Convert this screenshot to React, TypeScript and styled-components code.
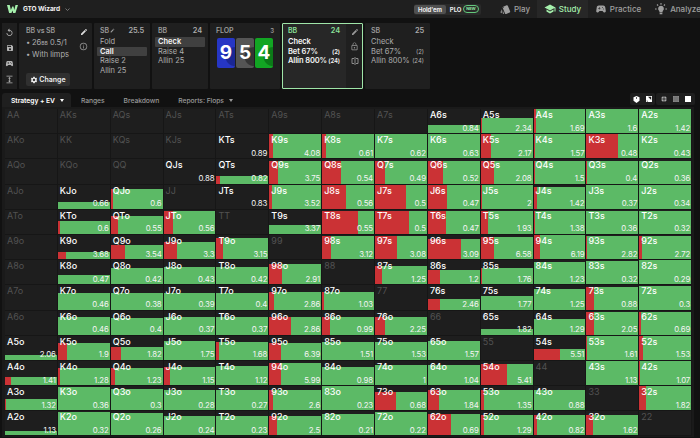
import React, { useState } from 'react'
import styled, { createGlobalStyle } from 'styled-components'
import {
  MdReplay,
  MdSave,
  MdSportsEsports,
  MdExpand,
  MdEdit,
  MdInfoOutline,
  MdSettings,
  MdLockOutline,
  MdSchool,
  MdStyle,
} from 'react-icons/md'

const RANKS = 'AKQJT98765432'.split('')

// one cell per hand: "ev/bar height in px/raise share in %", "-" when the hand is not in range
const STRATEGY = [
  '- - - - - - - - 0.84/8/0 2.34/15/1 1.69/24/4 1.6/24/0 1.42/24/0',
  '- - - - 0.89/0/0 4.08/24/7 0.61/24/7 0.62/24/0 0.63/24/0 2.17/24/19 1.57/24/2 0.48/24/61 0.43/24/0',
  '- - - 0.88/0/0 0.82/8/6 3.75/23/16 0.54/23/37 0.49/23/19 0.52/23/30 2.08/23/25 1.5/23/2 0.4/23/2 0.36/23/0',
  '- 0.66/7/0 0.6/20/5 - 0.83/0/0 3.52/24/6 0.56/24/46 0.5/24/59 0.47/24/36 2/24/1 1.42/22/7 0.37/24/0 0.34/24/0',
  '- 0.6/13/4 0.55/18/15 0.56/23/19 - 3.37/9/0 0.55/23/70 0.5/23/66 0.47/23/34 1.93/23/14 1.38/23/1 0.36/23/0 0.32/23/0',
  '- 3.68/7/15 3.54/14/28 3.3/17/26 3.15/21/12 - 3.12/23/18 3.08/23/42 3.09/20/63 6.58/22/25 6.19/24/12 2.82/23/2 2.72/23/5',
  '- 0.47/9/0 0.42/16/0 0.43/17/0 0.42/17/0 2.91/20/24 - 1.25/18/13 1.2/14/23 1.76/16/1 1.23/22/0 0.32/23/0 0.29/24/0',
  '- 0.46/17/0 0.38/17/0 0.39/17/0 0.4/17/0 2.86/18/10 1.03/18/4 - 2.46/11/24 1.77/14/0 1.25/21/0 0.88/23/14 0.3/24/0',
  '- 0.46/18/0 0.4/17/0 0.37/18/0 0.37/18/0 2.86/18/42 0.99/18/15 2.25/18/20 - 1.82/6/0 1.29/16/0 2.05/23/14 0.69/23/4',
  '2.06/5/0 1.9/17/17 1.82/13/20 1.75/19/0 1.68/18/4 6.39/17/22 1.51/18/0 1.53/18/0 1.57/19/0 - 5.51/11/50 1.61/24/2 1.53/24/7',
  '1.41/8/12 1.28/17/4 1.23/17/9 1.15/18/13 1.12/19/0 5.99/22/23 0.98/18/0 1/20/0 1.04/20/0 5.41/21/51 - 1.13/24/0 1.07/24/1',
  '1.32/11/1 0.36/23/0 0.3/21/0 0.28/20/0 0.27/20/0 2.6/20/8 0.23/24/0 0.68/18/41 1.84/20/22 1.35/20/6 0.88/20/0 - 1.82/24/12',
  '1.13/4/0 0.32/23/0 0.26/22/0 0.24/19/0 0.23/19/0 2.5/19/14 0.21/21/0 0.22/23/0 0.69/21/44 1.29/20/6 0.82/20/7 1.62/20/13 -',
].map((row) => row.split(' '))

const handName = (row: number, col: number) => {
  if (row === col) return RANKS[row] + RANKS[col]
  return row < col ? `${RANKS[row]}${RANKS[col]}s` : `${RANKS[col]}${RANKS[row]}o`
}

const TABS = ['Strategy + EV', 'Ranges', 'Breakdown', 'Reports: Flops']

const HandCell: React.FC<{ row: number; col: number }> = ({ row, col }) => {
  const cell = STRATEGY[row][col]
  const inRange = cell !== '-'
  const [ev, height, raise] = cell.split('/')
  return (
    <Cell>
      {inRange && <Bar style={{ height: `${height}px` }}><Raise style={{ width: `${raise}%` }} /></Bar>}
      <HandLabel $active={inRange}>{handName(row, col)}</HandLabel>
      {inRange && <Ev>{ev}</Ev>}
    </Cell>
  )
}

const App: React.FC = () => {
  const [tab, setTab] = useState(TABS[0])

  return (
    <>
      <GlobalStyle />
      <Page>
        <TopBar>
          <Logo viewBox="0 0 22 17">
            <path d="M0 0h5.500l2.300 10L10.500 3h2.500l1.500 7L17 0h5l-5.500 17h-4L11 11l-2.500 6h-4z" />
          </Logo>
          <Brand>GTO Wizard</Brand>
          <Chevron viewBox="0 0 10 6"><path d="M1 1l4 4 4-4" /></Chevron>
          <GameSwitch>
            <GameOption $active>Hold'em</GameOption>
            <GameOption>PLO<NewBadge>NEW</NewBadge></GameOption>
          </GameSwitch>
          <NavItem $width={44}><MdStyle size={11} />Play</NavItem>
          <NavItem $width={51} $active><MdSchool size={12} />Study</NavItem>
          <NavItem $width={60}><MdSportsEsports size={12} />Practice</NavItem>
          <NavItem $width={60}>
            <svg width="12" height="12" viewBox="0 0 22 22" fill="currentColor">
              <path d="M11 5a5.500 5.500 0 0 1 3 10v2H8v-2a5.500 5.500 0 0 1 3-10zM8.500 18h5v2.500h-5zM10 0h2v3h-2zM0 10h3v2H0zM19 10h3v2h-3zM3 3.500L4.500 2l2 2L5 5.500zM17.500 2L19 3.500l-2 2L15.500 4z" />
            </svg>
            Analyze
          </NavItem>
        </TopBar>

        <ActionRow>
          <ToolColumn>
            <MdReplay size={9} />
            <MdSave size={8} />
            <MdSportsEsports size={9} />
            <MdExpand size={9} />
          </ToolColumn>
          <Panel $width={73}>
            <ConfigBody>
              <PanelTitle>BB vs SB</PanelTitle>
              <ConfigLine>26<small>BB</small> 0.5/1</ConfigLine>
              <ConfigLine>With limps</ConfigLine>
              <ChangeButton><MdSettings size={8} />Change</ChangeButton>
            </ConfigBody>
            <SideIcons $plain>
              <MdEdit size={8} color="#ddd" />
              <MdInfoOutline size={9} />
            </SideIcons>
          </Panel>
          <Panel $width={56}>
            <PanelBody>
              <PanelTitle><span>SB<MdEdit size={5} /></span><b>25.5</b></PanelTitle>
              <Option>Fold</Option>
              <Option $picked>Call</Option>
              <Option>Raise 2</Option>
              <Option>Allin 25</Option>
            </PanelBody>
          </Panel>
          <Panel $width={56}>
            <PanelBody>
              <PanelTitle><span>BB</span><b>24</b></PanelTitle>
              <Option $picked>Check</Option>
              <Option>Raise 4</Option>
              <Option>Allin 25</Option>
            </PanelBody>
          </Panel>
          <Panel $width={70}>
            <PanelBody>
              <PanelTitle><span>FLOP</span><small>3</small></PanelTitle>
              <Board>
                <PlayingCard $color="#2636c4" $shade="#1b2794">9</PlayingCard>
                <PlayingCard $color="#555555" $shade="#353535">5</PlayingCard>
                <PlayingCard $color="#12a523" $shade="#0b7a18">4</PlayingCard>
              </Board>
            </PanelBody>
          </Panel>
          <Panel $width={81} $current>
            <PanelBody>
              <PanelTitle $green><span>BB</span><b>24</b></PanelTitle>
              <Option $bright>Check</Option>
              <Option $bright>Bet 67%<em>(2)</em></Option>
              <Option $bright>Allin 800%<em>(24)</em></Option>
            </PanelBody>
            <SideIcons>
              <MdEdit size={8} />
              <MdLockOutline size={9} />
              <svg width="8" height="8" viewBox="0 0 8 8" fill="none" stroke="currentColor" strokeWidth=".9">
                <path d="M3 1.500H1v5h2M5 1.500h2v5H5M4 0v8" />
              </svg>
            </SideIcons>
          </Panel>
          <Panel $width={65}>
            <PanelBody>
              <PanelTitle><span>SB</span><b>25</b></PanelTitle>
              <Option>Check</Option>
              <Option>Bet 67%<em>(2)</em></Option>
              <Option>Allin 800%<em>(24)</em></Option>
            </PanelBody>
          </Panel>
        </ActionRow>

        <TabRow>
          {TABS.map((name) => (
            <Tab key={name} $active={tab === name} onClick={() => setTab(name)}>
              {name}
              {(name === TABS[0] || name === TABS[3]) && <Caret />}
            </Tab>
          ))}
          <ViewTools>
            <ToolGroup $pad={3}>
              <svg width="7" height="7" viewBox="0 0 7 7">
                <path d="M3.500 0L6.500 1.300v3.400L3.500 7 .5 4.700V1.300z" fill="#fff" />
                <path d="M3.500 1v2" stroke="#222" strokeWidth=".7" />
              </svg>
              <svg width="6" height="6" viewBox="0 0 6 6">
                <path d="M0 0h6v6H0z" fill="#fff" />
                <path d="M2 .8h3.200V4zM.8 4.200L2.200 5.500H.8z" fill="#222" />
              </svg>
            </ToolGroup>
            <ToolGroup $pad={4.5}>
              <svg width="6" height="6" viewBox="0 0 6 6" fill="#ddd">
                <path d="M1.500 .5h1v2h-2v-1h1zM3.500 .5h1v1h1v1h-2zM.5 3.500h2v2h-1v-1h-1zM3.500 3.500h2v1h-1v1h-1z" />
              </svg>
              <svg width="6" height="6" viewBox="0 0 6 6">
                <path d="M0 0h6v6H0z" fill="#888" />
                <path d="M2 0v6M4 0v6M0 2h6M0 4h6" stroke="#555" strokeWidth=".4" />
              </svg>
              <svg width="6" height="6"><path d="M0 0h6v6H0z" fill="#fff" /></svg>
            </ToolGroup>
          </ViewTools>
        </TabRow>

        <MatrixPanel>
          <Matrix>
            {RANKS.map((_, row) =>
              RANKS.map((_, col) => <HandCell key={handName(row, col)} row={row} col={col} />)
            )}
          </Matrix>
        </MatrixPanel>
      </Page>
    </>
  )
}

export default App

const GlobalStyle = createGlobalStyle`
  * { box-sizing: border-box; }
  body {
    margin: 0;
    background: #111;
    overflow: hidden;
    font-family: Inter, 'Liberation Sans', sans-serif;
  }
`

const Page = styled.div`
  display: flex;
  flex-direction: column;
  width: 700px;
  height: 438px;
  overflow: hidden;
  background: #111;
`

const TopBar = styled.header`
  display: flex;
  align-items: center;
  flex: none;
  height: 18px;
  padding-left: 7px;
  background: #1f1f1f;
  overflow: hidden;
  > * {
    flex: none;
  }
`

const Logo = styled.svg`
  width: 11px;
  height: 8.500px;
  fill: #a5efac;
`

const Brand = styled.div`
  margin-left: 5px;
  width: 37px;
  font-size: 6.500px;
  font-weight: 700;
  letter-spacing: -0.1px;
  white-space: nowrap;
  color: #f2f2f2;
`

const Chevron = styled.svg`
  width: 5px;
  height: 3px;
  margin-left: 5px;
  fill: none;
  stroke: #888;
  stroke-width: 1.6;
`

const GameSwitch = styled.div`
  display: flex;
  align-items: center;
  width: 67px;
  height: 11px;
  margin: 0 12px 0 344px;
  border-radius: 2px;
  background: #2a2a2a;
`

const GameOption = styled.div<{ $active?: boolean }>`
  display: flex;
  align-items: center;
  height: 9px;
  padding: 0 4px;
  border-radius: 2px;
  font-size: 6px;
  font-weight: 700;
  letter-spacing: -0.1px;
  color: #eee;
  background: ${(props) => (props.$active ? '#505050' : 'none')};
`

const NewBadge = styled.span`
  margin-left: 2px;
  padding: 1px 2px;
  border: 1px solid #63c97b;
  border-radius: 4px;
  font-size: 4px;
  line-height: 4px;
  color: #8ee8a2;
`

const NavItem = styled.div<{ $width: number; $active?: boolean }>`
  display: flex;
  align-items: center;
  justify-content: center;
  gap: 3px;
  width: ${(props) => props.$width}px;
  height: 18px;
  font-size: 8px;
  font-weight: 500;
  color: ${(props) => (props.$active ? '#a5efac' : '#a0a0a0')};
  background: ${(props) => (props.$active ? '#272727' : 'none')};
`

const ActionRow = styled.div`
  display: flex;
  flex: none;
  gap: 2px;
  height: 66px;
  margin: 5px 0 0 2px;
`

const ToolColumn = styled.div`
  display: flex;
  flex-direction: column;
  align-items: center;
  gap: 7px;
  width: 15px;
  padding-top: 5px;
  color: #b4b4b4;
  background: #1f1f1f;
`

const Panel = styled.div<{ $width: number; $current?: boolean }>`
  display: flex;
  width: ${(props) => props.$width}px;
  border-radius: 1px;
  background: ${(props) => (props.$current ? '#272727' : '#1f1f1f')};
  outline: ${(props) => (props.$current ? '1px solid #9fe5a8' : 'none')};
  outline-offset: -1px;
`

const PanelBody = styled.div`
  flex: 1;
  padding: 4px 3px 0;
`

const ConfigBody = styled.div`
  width: 56px;
  padding-top: 4px;
  padding-left: 4px;
`

const PanelTitle = styled.div<{ $green?: boolean }>`
  display: flex;
  align-items: center;
  justify-content: space-between;
  height: 7.500px;
  padding: 0 3px;
  margin-bottom: 2.500px;
  font-size: 7px;
  line-height: 7.500px;
  font-weight: 600;
  letter-spacing: -0.1px;
  color: ${(props) => (props.$green ? '#8be09a' : '#999')};
  b {
    font-size: 7.400px;
    font-weight: 600;
    color: ${(props) => (props.$green ? '#8be09a' : '#aaa')};
  }
  small {
    font-size: 6px;
  }
  svg {
    margin-left: 1px;
  }
`

const ConfigLine = styled.div`
  height: 11.500px;
  padding-left: 9px;
  font-size: 7.500px;
  line-height: 12px;
  white-space: nowrap;
  color: #b0b0b0;
  small {
    font-size: 5px;
  }
  &::before {
    content: '•';
    float: left;
    width: 6px;
    margin-left: -6px;
  }
`

const ChangeButton = styled.div`
  display: flex;
  align-items: center;
  justify-content: center;
  gap: 1px;
  width: 44px;
  height: 13px;
  margin: 13px 0 0 3px;
  border-radius: 2px;
  font-size: 7px;
  font-weight: 600;
  color: #eee;
  background: #303030;
`

const SideIcons = styled.div<{ $plain?: boolean }>`
  display: flex;
  flex-direction: column;
  align-items: center;
  gap: 6px;
  width: 17px;
  padding-top: 5px;
  color: #999;
  background: ${(props) => (props.$plain ? 'none' : '#1f1f1f')};
`

const Option = styled.div<{ $picked?: boolean; $bright?: boolean }>`
  display: flex;
  justify-content: space-between;
  height: 9.500px;
  padding: 0 3px;
  border-radius: 1px;
  font-size: 7.500px;
  line-height: 10px;
  letter-spacing: ${(props) => (props.$bright ? '-0.1px' : '0')};
  white-space: nowrap;
  font-weight: ${(props) => (props.$picked || props.$bright ? 600 : 400)};
  color: ${(props) => (props.$picked || props.$bright ? '#f5f5f5' : '#adadad')};
  background: ${(props) => (props.$picked ? '#404040' : 'none')};
  em {
    font-size: 6px;
    font-style: normal;
  }
`

const Board = styled.div`
  display: flex;
  gap: 1px;
  padding: 1px 0 0 4px;
`

const PlayingCard = styled.div<{ $color: string; $shade: string }>`
  width: 18px;
  height: 30px;
  border-radius: 2px;
  font-size: 19px;
  font-weight: 700;
  line-height: 30px;
  text-align: center;
  color: #fff;
  background: radial-gradient(circle at 100% 62%, ${(props) => props.$shade} 9px, ${(props) => props.$color} 10px);
`

const TabRow = styled.div`
  display: flex;
  align-items: flex-end;
  flex: none;
  height: 18px;
  padding: 0 5px 0 2px;
`

const Tab = styled.div<{ $active: boolean }>`
  display: flex;
  align-items: center;
  height: 14px;
  padding: 0 ${(props) => (props.$active ? 7.5 : 9.5)}px 0 ${(props) => (props.$active ? 9 : 9.5)}px;
  border-radius: 3px 3px 0 0;
  font-size: 6.750px;
  letter-spacing: -0.06px;
  font-weight: ${(props) => (props.$active ? 600 : 500)};
  white-space: nowrap;
  color: ${(props) => (props.$active ? '#fff' : '#999')};
  background: ${(props) => (props.$active ? '#1f1f1f' : 'none')};
  cursor: pointer;
`

const Caret = styled.span`
  margin-left: 5px;
  border: 2px solid transparent;
  border-top: 3px solid currentColor;
  border-bottom: 0;
`

const ViewTools = styled.div`
  display: flex;
  align-self: flex-start;
  gap: 1px;
  margin: 4px 0 0 auto;
`

const ToolGroup = styled.div<{ $pad: number }>`
  display: flex;
  align-items: center;
  gap: 6px;
  height: 12px;
  padding: 0 ${(props) => props.$pad}px;
  border-radius: 2px;
  background: #1e1e1e;
`

const MatrixPanel = styled.main`
  flex: none;
  width: 692px;
  height: 330px;
  margin-left: 2px;
  padding: 2px 0 0 3px;
  background: #1a1a1a;
`

const Matrix = styled.div`
  display: grid;
  grid-template-columns: repeat(13, 52.870px);
  grid-auto-rows: 25.200px;
`

const Cell = styled.div`
  display: flex;
  flex-direction: column;
  justify-content: space-between;
  position: relative;
  border-right: 1px solid #161616;
  border-bottom: 1px solid #161616;
  background: #1e1e1e;
`

// sits behind the hand name and the ev
const Bar = styled.div`
  position: absolute;
  left: 0;
  right: 0;
  bottom: 0;
  background: #5cba66;
`

const Raise = styled.div`
  height: 100%;
  background: #cb3235;
`

const HandLabel = styled.span<{ $active: boolean }>`
  position: relative;
  padding-left: 2px;
  font-size: 9px;
  line-height: 12px;
  font-weight: ${(props) => (props.$active ? 500 : 400)};
  color: ${(props) => (props.$active ? '#fff' : '#525252')};
`

const Ev = styled.span`
  position: relative;
  padding-right: 1px;
  font-size: 7.800px;
  line-height: 9.500px;
  letter-spacing: -0.1px;
  text-align: right;
  color: #f4f4f4;
`
